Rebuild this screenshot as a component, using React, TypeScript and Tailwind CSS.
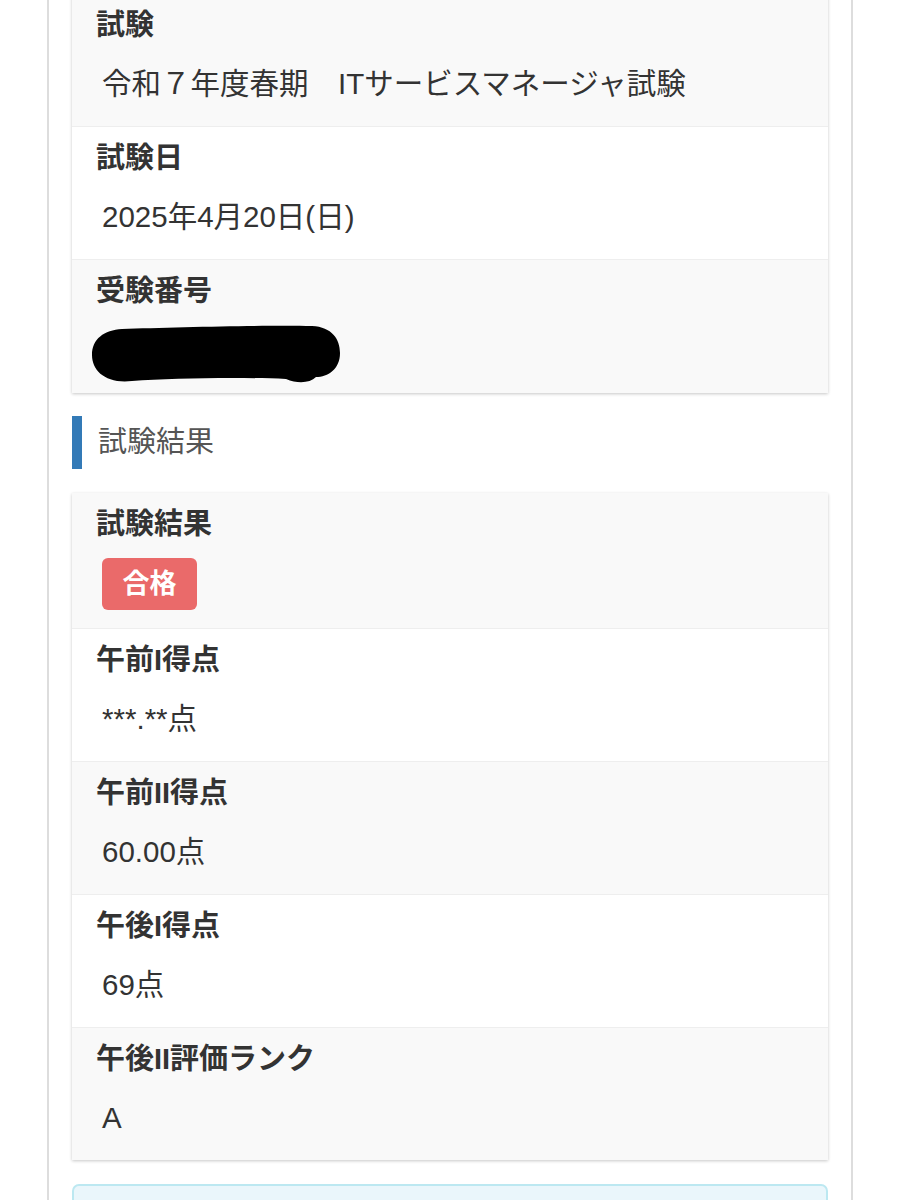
const font = { fontFamily: '"Liberation Sans", "Noto Sans CJK JP", sans-serif' };

type Row = { label: string; value?: string; badge?: string; redacted?: boolean };

const examRows: Row[] = [
    { label: '試験', value: '令和７年度春期　ITサービスマネージャ試験' },
    { label: '試験日', value: '2025年4月20日(日)' },
    { label: '受験番号', redacted: true },
];

const resultRows: Row[] = [
    { label: '試験結果', badge: '合格' },
    { label: '午前I得点', value: '***.**点' },
    { label: '午前II得点', value: '60.00点' },
    { label: '午後I得点', value: '69点' },
    { label: '午後II評価ランク', value: 'A' },
];

const Redacted = () => (
    <svg width="250" height="60" viewBox="0 0 250 60" className="block -ml-[4px] mt-[14px]">
        <path
            d="M30 4 C80 2 180 0 220 1 C240 2 248 14 248 28 C248 44 236 52 224 52 C218 58 206 59 194 54 C150 52 80 53 40 56 C14 59 0 46 0 30 C0 14 12 5 30 4 Z"
            fill="#000"
        />
    </svg>
);

const InfoCard = ({ rows, className = '' }: { rows: Row[]; className?: string }) => (
    <div className={`bg-white shadow-[0_1px_3px_rgba(0,0,0,0.22)] ${className}`}>
        {rows.map((row, i) => (
            <div
                key={row.label}
                className={`px-6 pt-[11px] ${i % 2 === 0 ? 'bg-[#f9f9f9]' : 'bg-white'} ${i > 0 ? 'border-t border-[#eeeeee]' : ''} ${row.badge ? 'pb-[18px]' : row.redacted ? 'pb-[8px]' : 'pb-[22px]'}`}
            >
                <div className="text-[29px] leading-[40px] font-bold text-[#333]">{row.label}</div>
                {row.value && (
                    <div className="mt-[19px] ml-[6px] text-[29.5px] leading-[40px] text-[#333]">{row.value}</div>
                )}
                {row.badge && (
                    <div className="mt-[14px] ml-[6px] inline-flex items-center justify-center w-[95px] h-[52px] rounded-[6px] bg-[#ea6a6a] text-white text-[27px] font-bold">
                        {row.badge}
                    </div>
                )}
                {row.redacted && <Redacted />}
            </div>
        ))}
    </div>
);

const App = () => {
    return (
        <div className="min-h-screen bg-white" style={font}>
            <div className="mx-[47px] min-h-[1200px] border-x-2 border-[#dddddd] px-[23px] overflow-hidden">
                <InfoCard rows={examRows} className="-mt-[6px]" />

                <div className="mt-[23px] flex items-center h-[53px] border-l-[10px] border-[#337ab7] pl-4">
                    <span className="text-[29px] text-[#555]">試験結果</span>
                </div>

                <InfoCard rows={resultRows} className="mt-[24px]" />

                <div className="mt-[24px] h-[60px] rounded-[7px] border-2 border-[#bce8f1] bg-[#eaf6fb]"></div>
            </div>
        </div>
    );
}

export default App;
